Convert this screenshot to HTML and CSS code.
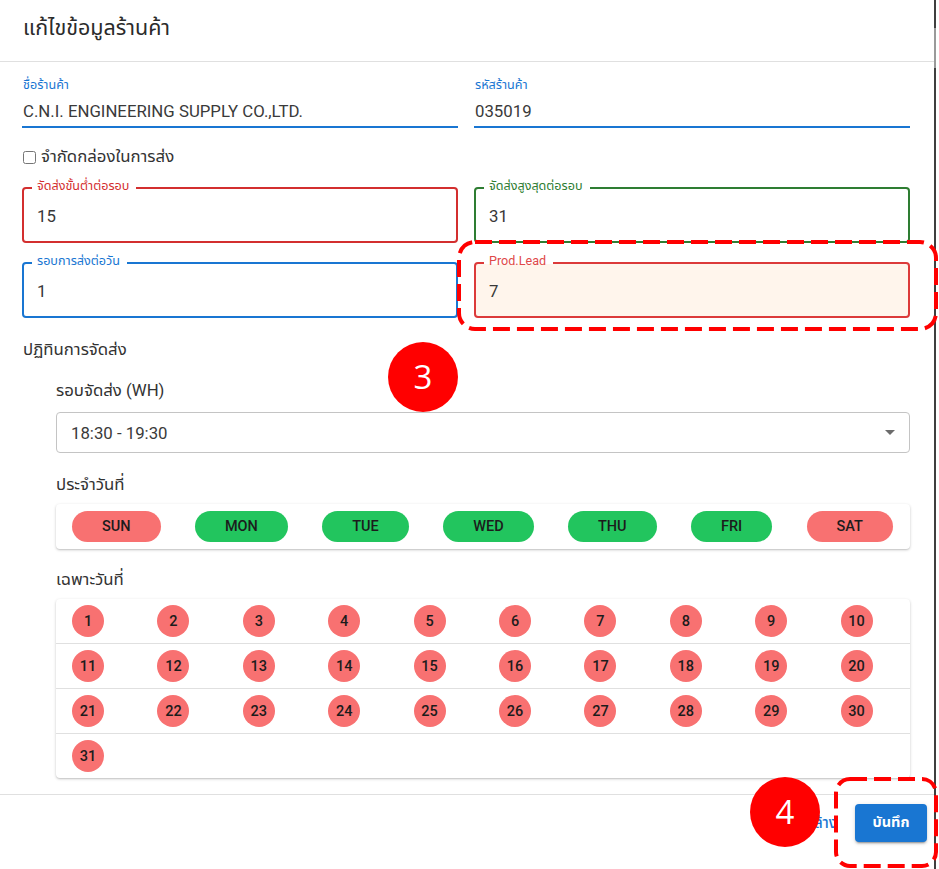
FILE: index.html
```html
<!DOCTYPE html>
<html lang="th">
<head>
<meta charset="utf-8">
<title>แก้ไขข้อมูลร้านค้า</title>
<link rel="stylesheet" href="styles.css">
</head>
<body>
<div class="dialog">
  <header class="dlg-title">แก้ไขข้อมูลร้านค้า</header>

  <main class="dlg-body">
    <div class="cols">
      <div class="sfield">
        <div class="sfield-label">ชื่อร้านค้า</div>
        <div class="sfield-value">C.N.I. ENGINEERING SUPPLY CO.,LTD.</div>
      </div>
      <div class="sfield">
        <div class="sfield-label">รหัสร้านค้า</div>
        <div class="sfield-value">035019</div>
      </div>
    </div>

    <label class="check"><input type="checkbox" class="check-box"><span>จำกัดกล่องในการส่ง</span></label>

    <div class="cols ogrid">
      <div class="ofield o-red">
        <span class="olabel">จัดส่งขั้นต่ำต่อรอบ</span>
        <span class="ovalue">15</span>
      </div>
      <div class="ofield o-green">
        <span class="olabel">จัดส่งสูงสุดต่อรอบ</span>
        <span class="ovalue">31</span>
      </div>
      <div class="ofield o-blue">
        <span class="olabel">รอบการส่งต่อวัน</span>
        <span class="ovalue">1</span>
      </div>
      <div class="ofield o-warn">
        <span class="olabel">Prod.Lead</span>
        <span class="ovalue">7</span>
      </div>
    </div>

    <div class="section-title">ปฏิทินการจัดส่ง</div>

    <div class="sub">
      <div class="sub-label">รอบจัดส่ง (WH)</div>
      <div class="select">
        <span class="select-value">18:30 - 19:30</span>
        <span class="select-arrow"></span>
      </div>

      <div class="sub-label mt">ประจำวันที่</div>
      <div class="card days">
        <span class="chip off">SUN</span>
        <span class="chip on">MON</span>
        <span class="chip on">TUE</span>
        <span class="chip on">WED</span>
        <span class="chip on">THU</span>
        <span class="chip on">FRI</span>
        <span class="chip off">SAT</span>
      </div>

      <div class="sub-label mt2">เฉพาะวันที่</div>
      <div class="card cal">
        <div class="cal-row">
          <span class="cell"><span class="dot">1</span></span><span class="cell"><span class="dot">2</span></span><span class="cell"><span class="dot">3</span></span><span class="cell"><span class="dot">4</span></span><span class="cell"><span class="dot">5</span></span><span class="cell"><span class="dot">6</span></span><span class="cell"><span class="dot">7</span></span><span class="cell"><span class="dot">8</span></span><span class="cell"><span class="dot">9</span></span><span class="cell"><span class="dot">10</span></span>
        </div>
        <div class="cal-row">
          <span class="cell"><span class="dot">11</span></span><span class="cell"><span class="dot">12</span></span><span class="cell"><span class="dot">13</span></span><span class="cell"><span class="dot">14</span></span><span class="cell"><span class="dot">15</span></span><span class="cell"><span class="dot">16</span></span><span class="cell"><span class="dot">17</span></span><span class="cell"><span class="dot">18</span></span><span class="cell"><span class="dot">19</span></span><span class="cell"><span class="dot">20</span></span>
        </div>
        <div class="cal-row">
          <span class="cell"><span class="dot">21</span></span><span class="cell"><span class="dot">22</span></span><span class="cell"><span class="dot">23</span></span><span class="cell"><span class="dot">24</span></span><span class="cell"><span class="dot">25</span></span><span class="cell"><span class="dot">26</span></span><span class="cell"><span class="dot">27</span></span><span class="cell"><span class="dot">28</span></span><span class="cell"><span class="dot">29</span></span><span class="cell"><span class="dot">30</span></span>
        </div>
        <div class="cal-row">
          <span class="cell"><span class="dot">31</span></span>
        </div>
      </div>
    </div>
  </main>

  <footer class="dlg-actions">
    <button class="btn-text">ล้าง</button>
    <button class="btn-save">บันทึก</button>
  </footer>

  <svg class="anno anno-box1" width="481" height="91" viewBox="0 0 481 91"><rect x="2" y="2" width="477" height="87" rx="16" ry="16" fill="none" stroke="#ff0000" stroke-width="4" stroke-dasharray="17 7"/></svg>
  <svg class="anno anno-box2" width="104" height="91" viewBox="0 0 104 91"><rect x="2" y="2" width="100" height="87" rx="14" ry="14" fill="none" stroke="#ff0000" stroke-width="4" stroke-dasharray="17 7"/></svg>
  <div class="anno badge badge3">3</div>
  <div class="anno badge badge4">4</div>
</div>
</body>
</html>
```

FILE: styles.css
```css
* { box-sizing: border-box; }

html, body {
  margin: 0;
  padding: 0;
  background: #ffffff;
}

body {
  font-family: Roboto, "Noto Sans Thai", "Noto Sans", "DejaVu Sans", sans-serif;
  color: #333333;
  width: 939px;
  height: 869px;
  overflow: hidden;
}

.dialog {
  position: relative;
  width: 936px;
  height: 869px;
  border-right: 2px solid #3f3f3f;
  background: #ffffff;
}

.dialog::after {
  content: "";
  position: absolute;
  right: -2px;
  top: 28px;
  width: 2px;
  height: 40px;
  background: #9a9a9a;
}

.dlg-title {
  padding: 12px 23px 17px;
  font-size: 21.5px;
  line-height: 32px;
  color: #2b2b2b;
  border-bottom: 1px solid #e0e0e0;
}

.dlg-body {
  padding: 15px 24px 16px 22px;
  border-bottom: 1px solid #e0e0e0;
}

.cols {
  display: grid;
  grid-template-columns: 1fr 1fr;
  column-gap: 16px;
}

.sfield {
  border-bottom: 2px solid #1976d2;
  padding-bottom: 3px;
}

.sfield-label {
  font-size: 12.6px;
  line-height: 16px;
  color: #1976d2;
  padding-left: 1px;
}

.sfield-value {
  margin-top: 6px;
  font-size: 16.8px;
  line-height: 24px;
  color: #3a3a3a;
  padding-left: 1px;
}

.check {
  display: flex;
  align-items: center;
  gap: 5px;
  margin-top: 17px;
  height: 24px;
  font-size: 16.8px;
  color: #333;
}

.check-box {
  width: 13px;
  height: 13px;
  margin: 0 0 0 1px;
}

.ogrid {
  margin-top: 18px;
  row-gap: 19px;
}

.ofield {
  position: relative;
  height: 56px;
  border: 2px solid #d32f2f;
  border-radius: 4px;
  padding: 0 13px;
  display: flex;
  align-items: center;
}

.olabel {
  position: absolute;
  top: -10px;
  left: 8px;
  padding: 0 7px 0 5px;
  font-size: 12.6px;
  line-height: 14px;
  background: #ffffff;
}

.ovalue {
  font-size: 16.8px;
  line-height: 24px;
  color: #383838;
  padding-top: 2px;
}

.o-red { border-color: #d32f2f; }
.o-red .olabel { color: #d32f2f; }
.o-green { border-color: #2e7d32; }
.o-green .olabel { color: #2e7d32; }
.o-blue { border-color: #1976d2; }
.o-blue .olabel { color: #1976d2; }
.o-warn { border-color: #dc3a3a; background: #fff5ec; }
.o-warn .olabel {
  color: #e04848;
  background: linear-gradient(to bottom, #ffffff 0, #ffffff 70%, #fff5ec 70%);
}

.section-title {
  margin-top: 19px;
  font-size: 16.8px;
  line-height: 24px;
  padding-left: 1px;
  color: #333;
}

.sub {
  padding-left: 34px;
}

.sub-label {
  margin-top: 17px;
  font-size: 16.8px;
  line-height: 24px;
  color: #333;
}

.sub-label.mt { margin-top: 19px; }
.sub-label.mt2 { margin-top: 18px; }

.select {
  margin-top: 10px;
  height: 41px;
  border: 1px solid #c4c4c4;
  border-radius: 4px;
  display: flex;
  align-items: center;
  padding: 0 14px 0 14px;
}

.select-value {
  font-size: 16.8px;
  color: #3a3a3a;
}

.select-arrow {
  margin-left: auto;
  width: 0;
  height: 0;
  border-left: 5px solid transparent;
  border-right: 5px solid transparent;
  border-top: 5px solid #6b6b6b;
}

.card {
  margin-top: 8px;
  background: #ffffff;
  border-radius: 4px;
  box-shadow: 0 1px 3px rgba(0, 0, 0, 0.22), 0 1px 1px rgba(0, 0, 0, 0.06);
}

.days {
  height: 45px;
  display: flex;
  align-items: center;
  justify-content: space-between;
  padding: 0 17px 0 16px;
}

.chip {
  height: 31px;
  line-height: 31px;
  border-radius: 16px;
  padding: 0 30px;
  font-size: 14.5px;
  font-weight: 500;
  color: #1c1c1c;
}

.chip.on { background: #22c55e; }
.chip.off { background: #f87171; }

.cal-row {
  display: grid;
  grid-template-columns: repeat(10, 1fr);
  height: 45px;
  align-items: center;
  border-bottom: 1px solid #e0e0e0;
}

.cal-row:last-child {
  border-bottom: none;
  height: 44px;
}

.cell {
  padding-left: 16px;
}

.dot {
  display: flex;
  align-items: center;
  justify-content: center;
  width: 32px;
  height: 32px;
  border-radius: 50%;
  background: #f87171;
  font-size: 14.5px;
  font-weight: 500;
  color: #1c1c1c;
}

.dlg-actions {
  display: flex;
  justify-content: flex-end;
  align-items: center;
  gap: 8px;
  padding: 9px 7px 9px 8px;
}

.btn-text {
  height: 38px;
  padding: 0 10px 0 8px;
  border: none;
  background: transparent;
  color: #1976d2;
  font-family: Roboto, "Noto Sans Thai", "Noto Sans", sans-serif;
  font-size: 15px;
  font-weight: 500;
}

.btn-save {
  height: 38px;
  width: 72px;
  border: none;
  border-radius: 4px;
  background: #1976d2;
  color: #ffffff;
  font-family: Roboto, "Noto Sans Thai", "Noto Sans", sans-serif;
  font-size: 14.5px;
  font-weight: 700;
  box-shadow: 0 3px 1px -2px rgba(0,0,0,0.2), 0 2px 2px 0 rgba(0,0,0,0.14), 0 1px 5px 0 rgba(0,0,0,0.12);
}

.anno {
  position: absolute;
}

.anno-box1 { left: 457px; top: 240px; }
.anno-box2 { left: 834px; top: 777px; }

.badge {
  width: 70px;
  height: 70px;
  border-radius: 50%;
  background: #ff0000;
  color: #ffffff;
  font-family: "Open Sans", "Liberation Sans", sans-serif;
  font-size: 33px;
  line-height: 70px;
  text-align: center;
}

.badge3 { left: 388px; top: 342px; }
.badge4 { left: 750px; top: 777px; }
```
